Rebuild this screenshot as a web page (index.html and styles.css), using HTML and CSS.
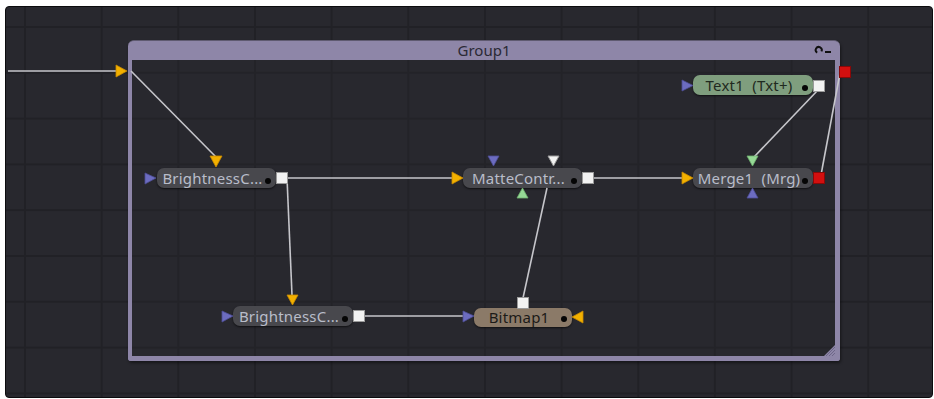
FILE: index.html
```html
<!DOCTYPE html>
<html lang="en">
<head>
  <meta charset="UTF-8">
  <title>Flow - Group1</title>
  <link rel="stylesheet" href="styles.css">
</head>
<body>

  <div class="flow-view">
    <div class="canvas">

      <div class="group">
        <div class="group-title">
          <span>Group1</span>
          <svg class="group-icons" width="20" height="10" viewBox="0 0 20 10">
            <path d="M3.2 7.6 A3 3 0 1 1 7.4 6.4" fill="none" stroke="#111" stroke-width="2"/>
            <rect x="11" y="6" width="6" height="2" fill="#111"/>
          </svg>
        </div>
        <div class="group-body">
          <svg class="resize-grip" width="13" height="13" viewBox="0 0 13 13">
            <path d="M13 0 L13 13 L0 13 Z" fill="#8e86a8"/>
            <path d="M12 3 L3 12 M12 6 L6 12 M12 9 L9 12" stroke="#6d6688" stroke-width="1"/>
          </svg>
        </div>
      </div>

      <div class="node tool" style="left:157px;top:168px;width:119px">BrightnessC...</div>
      <div class="node tool" style="left:463px;top:168px;width:119px">MatteContr...</div>
      <div class="node tool" style="left:693px;top:168px;width:120px">Merge1&nbsp; (Mrg)</div>
      <div class="node text-node" style="left:693px;top:75px;width:120px">Text1&nbsp; (Txt+)</div>
      <div class="node tool" style="left:233px;top:306px;width:120px">BrightnessC...</div>
      <div class="node bitmap" style="left:474px;top:308px;width:98px">Bitmap1</div>

      <svg class="wires" width="934" height="399" viewBox="0 0 934 399">
        <g stroke="#c6c6cb" stroke-width="1.6" fill="none">
          <line x1="8" y1="71" x2="116" y2="71"/>
          <line x1="131" y1="71" x2="216" y2="157"/>
          <line x1="287" y1="178" x2="452" y2="178"/>
          <line x1="287" y1="178" x2="292" y2="295"/>
          <line x1="364" y1="316" x2="463" y2="316"/>
          <line x1="547" y1="188" x2="523" y2="298"/>
          <line x1="593" y1="178" x2="682" y2="178"/>
          <line x1="818" y1="90" x2="753" y2="158"/>
          <line x1="840" y1="73" x2="821" y2="175"/>
        </g>

        <g class="port-yellow">
          <polygon points="116,65 127,71 116,77"/>
          <polygon points="210,156 222,156 216,167"/>
          <polygon points="452,172 463,178 452,184"/>
          <polygon points="682,172 693,178 682,184"/>
          <polygon points="287,295 298,295 292.5,305"/>
          <polygon points="583,311 572,317 583,323"/>
        </g>
        <g class="port-blue">
          <polygon points="145,173 156,178 145,184"/>
          <polygon points="488,156 499,156 493.5,166"/>
          <polygon points="747,198 758,198 752.5,188"/>
          <polygon points="682,80 693,85.5 682,91"/>
          <polygon points="222,311 233,316 222,322"/>
          <polygon points="463,311 474,316 463,322"/>
        </g>
        <g class="port-green">
          <polygon points="517,198 528,198 522.5,188"/>
          <polygon points="747,156 758,156 752.5,166"/>
        </g>
        <g class="port-white">
          <polygon points="548,156 559,156 553.5,166"/>
          <rect x="276.5" y="172.5" width="11" height="11"/>
          <rect x="582.5" y="172.5" width="11" height="11"/>
          <rect x="813.5" y="80.5" width="11" height="11"/>
          <rect x="353.5" y="310.5" width="11" height="11"/>
          <rect x="517.5" y="297.5" width="11" height="11"/>
        </g>
        <g class="port-red">
          <rect x="813.5" y="172.5" width="11" height="11"/>
          <rect x="839.5" y="66.5" width="11" height="11"/>
        </g>
      </svg>

    </div>
  </div>

</body>
</html>
```

FILE: styles.css
```css
* {
  box-sizing: border-box;
}

body {
  margin: 0;
  background-color: #ffffff;
  font-family: 'Noto Sans', 'Open Sans', sans-serif;
}

.flow-view {
  margin: 6px 1px 1px 5px;
  height: 392px;
  border: 1px solid #0c0c0e;
  border-radius: 4px;
  overflow: hidden;
  position: relative;
  background-color: #28282e;
  background-image:
    linear-gradient(to right, #212126 1.5px, transparent 1.5px),
    linear-gradient(to bottom, #212126 1.5px, transparent 1.5px);
  background-size: 76.67px 45.8px;
  background-position: 18px 19px;
}

.canvas {
  position: absolute;
  left: -6px;
  top: -7px;
  width: 934px;
  height: 399px;
}

/* group frame */

.group {
  position: absolute;
  left: 128px;
  top: 40px;
  width: 712px;
  height: 321px;
  display: flex;
  flex-direction: column;
  box-shadow: 1px 2px 3px rgba(0, 0, 0, 0.45);
  border-radius: 6px 6px 3px 3px;
}

.group-title {
  height: 20px;
  background-color: #8e86a8;
  border-top: 1px solid #5f5a70;
  border-radius: 6px 6px 0 0;
  display: flex;
  align-items: center;
  justify-content: center;
  position: relative;
  color: #2a2935;
  font-size: 15px;
  line-height: 1;
}

.group-icons {
  position: absolute;
  right: 6px;
  top: 4px;
}

.group-body {
  flex: 1;
  border: 4px solid #8e86a8;
  border-right-width: 5px;
  border-bottom-width: 5px;
  border-top: none;
  border-radius: 0 0 3px 3px;
  background-color: rgba(40, 40, 46, 0.35);
  position: relative;
}

.resize-grip {
  position: absolute;
  right: -1px;
  bottom: -1px;
}

/* tool nodes */

.node {
  position: absolute;
  height: 20px;
  border-radius: 7px;
  display: flex;
  align-items: center;
  justify-content: center;
  padding: 0 10px 0 2px;
  font-size: 15px;
  letter-spacing: 0.2px;
  line-height: 1;
  white-space: nowrap;
  box-shadow: 0 1px 2px rgba(0, 0, 0, 0.6);
}

.node::after {
  content: '';
  position: absolute;
  right: 5px;
  top: 10px;
  width: 6px;
  height: 6px;
  border-radius: 50%;
  background-color: #050505;
}

.tool {
  background-color: #48484d;
  color: #b9bdca;
}

.text-node {
  background-color: #7f9e7e;
  color: #1f2a1f;
}

.bitmap {
  height: 19px;
  background-color: #8b7a68;
  color: #1c1a18;
}

.bitmap::after {
  top: 8px;
}

/* wires and ports */

.wires {
  position: absolute;
  left: 0;
  top: 0;
}

.port-yellow { fill: #f2b000; stroke: #c98a00; stroke-width: 0.8; }
.port-blue { fill: #6c6cc0; stroke: #4e4e98; stroke-width: 0.8; }
.port-green { fill: #95d895; stroke: #6fb06f; stroke-width: 0.8; }
.port-white { fill: #f2f2f2; stroke: #9a9a9a; stroke-width: 1; }
.port-red { fill: #d20f0f; stroke: #8a0808; stroke-width: 1; }
```
